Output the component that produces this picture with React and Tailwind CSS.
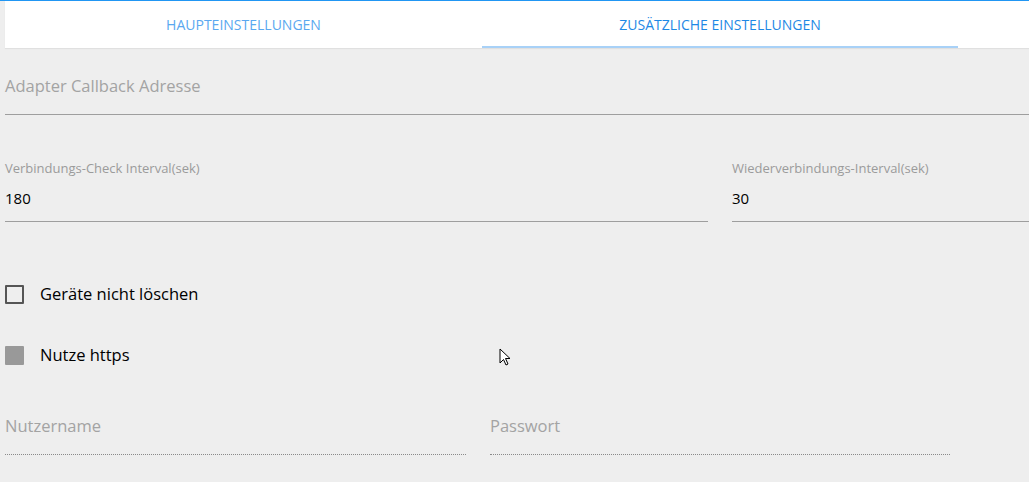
import React from "react"

const font = { fontFamily: '"Open Sans", "Noto Sans", sans-serif' }

function TextField({ label, value, dotted, className = "" }) {
    if (value !== undefined) {
        return (
            <div className={`flex flex-col ${className}`}>
                <span className="text-[13px] text-[#9b9b9b] leading-none h-[13px] mt-[2px]">{label}</span>
                <span className="text-[15px] text-black leading-none mt-[16px] h-[16px]">{value}</span>
                <div className="mt-[14px] h-px bg-[#9e9e9e]" />
            </div>
        )
    }
    return (
        <div className={`flex flex-col ${className}`}>
            <span className="text-[16.5px] text-[#a3a3a3] leading-none h-[18px]">{label}</span>
            <div
                className={`mt-[18px] ${dotted ? "border-b border-dotted border-[#8a8a8a]" : "h-px bg-[#9e9e9e]"}`}
            />
        </div>
    )
}

function Checkbox({ label, filled }) {
    return (
        <div className="flex items-center gap-[16px] h-[19px]">
            {filled
                ? <div className="w-[19px] h-[19px] bg-[#999999] rounded-[1px]" />
                : <div className="w-[19px] h-[19px] border-2 border-[#555555] rounded-[1px]" />
            }
            <span className="text-[16.5px] text-black leading-none">{label}</span>
        </div>
    )
}

export default function App() {
    return (
        <div className="relative w-[1029px] h-[482px] bg-[#eeeeee] overflow-hidden" style={font}>
            <div className="h-px bg-[#2196f3]" />
            <div className="ml-[5px] h-[47px] bg-white flex shadow-[0_1px_1px_rgba(0,0,0,0.06)]">
                <div className="w-[477px] flex items-center justify-center text-[14px] text-[#5aa8f0] uppercase">
                    Haupteinstellungen
                </div>
                <div className="w-[476px] relative flex items-center justify-center text-[14px] text-[#1e88e5] uppercase">
                    Zusätzliche Einstellungen
                    <div className="absolute left-0 right-0 bottom-0 h-[2px] bg-[#a8d1f7]" />
                </div>
            </div>

            <div className="pl-[5px] flex flex-col">
                <TextField label="Adapter Callback Adresse" className="mt-[30px]" />

                <div className="flex gap-[24px] mt-[45px]">
                    <TextField label="Verbindungs-Check Interval(sek)" value="180" className="w-[703px]" />
                    <TextField label="Wiederverbindungs-Interval(sek)" value="30" className="flex-1" />
                </div>

                <div className="mt-[63px]">
                    <Checkbox label="Geräte nicht löschen" />
                </div>
                <div className="mt-[42px]">
                    <Checkbox label="Nutze https" filled />
                </div>

                <div className="flex gap-[24px] mt-[53px]">
                    <TextField label="Nutzername" dotted className="w-[461px]" />
                    <TextField label="Passwort" dotted className="w-[460px]" />
                </div>
            </div>

            <svg className="absolute left-[499px] top-[348px]" width="13" height="20" viewBox="0 0 13 20">
                <path d="M1 1 L1 15 L4.5 11.5 L7 17 L9 16 L6.5 10.5 L11 10.5 Z" fill="white" stroke="black" strokeWidth="1" strokeLinejoin="round" />
            </svg>
        </div>
    )
}
